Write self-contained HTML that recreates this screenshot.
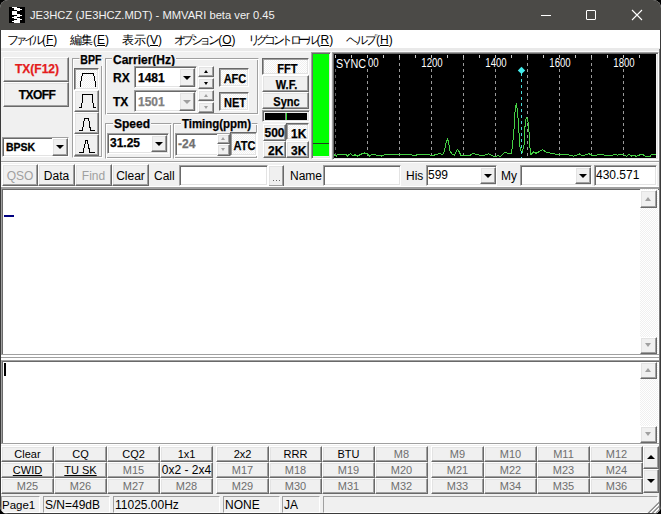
<!DOCTYPE html><html><head><meta charset="utf-8"><style>*{box-sizing:border-box;margin:0;padding:0}
html,body{width:661px;height:514px;overflow:hidden;background:#000}
body{position:relative;font-family:"Liberation Sans",sans-serif;font-size:12px;color:#000}
.a{position:absolute}
#win{position:absolute;left:0;top:0;width:661px;height:514px;background:#f0f0f0;border-radius:8px;overflow:hidden}
#title{position:absolute;left:0;top:0;width:661px;height:30px;background:#4b4a47}
#menu{position:absolute;left:0;top:30px;width:661px;height:18px;background:#fff}
.btn{position:absolute;background:#f0f0f0;border:1px solid;border-color:#fff #696969 #696969 #fff;box-shadow:inset -1px -1px #a0a0a0,inset 1px 1px #e3e3e3;text-align:center;white-space:nowrap;overflow:hidden}
.prs{position:absolute;border:1px solid;border-color:#696969 #fff #fff #696969;box-shadow:inset 1px 1px #a0a0a0,inset -1px -1px #e3e3e3;text-align:center;white-space:nowrap;overflow:hidden;background-color:#f0f0f0;background-image:linear-gradient(45deg,#fff 25%,transparent 25%,transparent 75%,#fff 75%),linear-gradient(45deg,#fff 25%,transparent 25%,transparent 75%,#fff 75%);background-size:2px 2px;background-position:0 0,1px 1px}
.sunk{position:absolute;background:#fff;border:1px solid;border-color:#a0a0a0 #fff #fff #a0a0a0;box-shadow:inset 1px 1px #696969,inset -1px -1px #e3e3e3;white-space:nowrap;overflow:hidden}
.grp{position:absolute;border:1px solid;border-color:#a0a0a0 #fff #fff #a0a0a0;box-shadow:inset 1px 1px #fff,inset -1px -1px #a0a0a0}
.gl{position:absolute;background:#f0f0f0;font-weight:bold;font-size:12px;line-height:12px;padding:0 1px;white-space:nowrap}
.b{font-weight:bold}
.dd{position:absolute;background:#f0f0f0;border:1px solid;border-color:#fff #696969 #696969 #fff;box-shadow:inset -1px -1px #a0a0a0,inset 1px 1px #e3e3e3}
.dd:after{content:"";position:absolute;left:50%;top:50%;margin-left:-4px;margin-top:-2px;border-left:4px solid transparent;border-right:4px solid transparent;border-top:4px solid #000}
.dd.dis:after{border-top-color:#a0a0a0}
.lbl{position:absolute;white-space:nowrap}
.gr{color:#8d8d8d}
.sp{position:absolute;border:1px solid;border-color:#a0a0a0 #fff #fff #a0a0a0;box-shadow:inset 1px 1px #696969,inset -1px -1px #e3e3e3}

.lbl[style*="font-weight:bold"],.gl{-webkit-text-stroke:0.25px currentColor}
</style></head><body><div id="win"><div id="title"></div>
<svg class="a" style="left:9px;top:7px" width="16" height="16" viewBox="0 0 16 16" shape-rendering="crispEdges">
<rect width="16" height="16" fill="#000"/><g fill="#fff">
<rect x="3" y="0" width="3" height="1"/><rect x="5" y="0" width="3" height="3"/><rect x="8" y="1" width="3" height="3"/><rect x="11" y="2" width="2" height="1"/>
<rect x="3" y="4" width="5" height="4"/><rect x="8" y="7" width="3" height="3"/><rect x="11" y="8" width="2" height="1"/>
<rect x="3" y="10" width="2" height="1"/><rect x="5" y="9" width="3" height="3"/><rect x="8" y="11" width="3" height="2"/><rect x="11" y="12" width="2" height="1"/>
<rect x="3" y="14" width="2" height="1"/><rect x="5" y="13" width="6" height="3"/></g>
</svg>
<div class="lbl" style="left:30px;top:7px;color:#f2f2f2;font-size:11.2px;line-height:16px">JE3HCZ (JE3HCZ.MDT) - MMVARI beta ver 0.45</div>
<div class="a" style="left:541px;top:15px;width:10px;height:1px;background:#fff"></div>
<div class="a" style="left:586px;top:10px;width:10px;height:10px;border:1px solid #fff;border-radius:1px"></div>
<svg class="a" style="left:631px;top:9px" width="12" height="12" viewBox="0 0 12 12"><path d="M1 1L11 11M11 1L1 11" stroke="#fff" stroke-width="1.1"/></svg>
<div id="menu"></div>
<div class="lbl" style="left:9px;top:33px;font-size:12px;line-height:15px;height:15px"><span style="display:inline-block;width:33.0px;letter-spacing:-3.75px;vertical-align:top;height:15px;text-indent:-1.88px">ファイル</span><span style="display:inline-block;vertical-align:top;height:15px">(<u>F</u>)</span></div>
<div class="lbl" style="left:70.7px;top:33px;font-size:12px;line-height:15px;height:15px"><span style="display:inline-block;width:22.4px;letter-spacing:-0.80px;vertical-align:top;height:15px;text-indent:-0.40px">編集</span><span style="display:inline-block;vertical-align:top;height:15px">(<u>E</u>)</span></div>
<div class="lbl" style="left:122px;top:33px;font-size:12px;line-height:15px;height:15px"><span style="display:inline-block;width:24.0px;letter-spacing:0.00px;vertical-align:top;height:15px;text-indent:0.00px">表示</span><span style="display:inline-block;vertical-align:top;height:15px">(<u>V</u>)</span></div>
<div class="lbl" style="left:175.2px;top:33px;font-size:12px;line-height:15px;height:15px"><span style="display:inline-block;width:43.0px;letter-spacing:-3.40px;vertical-align:top;height:15px;text-indent:-1.70px">オプション</span><span style="display:inline-block;vertical-align:top;height:15px">(<u>O</u>)</span></div>
<div class="lbl" style="left:249.3px;top:33px;font-size:12px;line-height:15px;height:15px"><span style="display:inline-block;width:67.2px;letter-spacing:-3.60px;vertical-align:top;height:15px;text-indent:-1.80px">リグコントロール</span><span style="display:inline-block;vertical-align:top;height:15px">(<u>R</u>)</span></div>
<div class="lbl" style="left:347.5px;top:33px;font-size:12px;line-height:15px;height:15px"><span style="display:inline-block;width:28.5px;letter-spacing:-2.50px;vertical-align:top;height:15px;text-indent:-1.25px">ヘルプ</span><span style="display:inline-block;vertical-align:top;height:15px">(<u>H</u>)</span></div>
<div class="a" style="left:0;top:48px;width:661px;height:3px;background:#e9e9e9"></div>
<div class="a" style="left:0;top:51px;width:661px;height:1px;background:#fafafa"></div>
<div class="btn" style="left:3px;top:57px;width:66px;height:25px;"></div>
<div class="lbl" style="left:4px;top:62px;line-height:14px;width:66px;text-align:center;color:#e41c1c;font-weight:bold">TX(F12)</div>
<div class="btn" style="left:3px;top:82px;width:66px;height:25px;"></div>
<div class="lbl" style="left:4px;top:88px;line-height:14px;width:66px;text-align:center;font-weight:bold;letter-spacing:-0.6px">TXOFF</div>
<div class="sunk" style="left:2px;top:137px;width:67px;height:20px;"></div>
<div class="lbl" style="left:6px;top:140px;line-height:14px;font-weight:bold;font-size:10.5px;-webkit-text-stroke:0.3px #000">BPSK</div>
<div class="dd" style="left:52px;top:138px;width:16px;height:18px;"></div>
<div class="grp" style="left:72px;top:58px;width:31px;height:100px;"></div>
<div class="gl" style="left:78px;top:54px;font-size:12px;transform:scaleX(0.88);transform-origin:12px 0">BPF</div>
<div class="prs" style="left:74px;top:68px;width:25px;height:22px;"></div>
<div class="btn" style="left:74px;top:90px;width:25px;height:22px;"></div>
<div class="btn" style="left:74px;top:112px;width:25px;height:22px;"></div>
<div class="btn" style="left:74px;top:134px;width:25px;height:22px;"></div>
<svg class="a" style="left:0;top:0" width="661" height="514"><path d="M80.5 87V83L82.5 73.5H93.5L95.5 83V87 M79 107.5H81.5L83 94H92L93.5 107.5H96 M79 130.5H82.5L84.5 118H88.5L90.5 130.5H95 M79 152.5H83L86 140H87L90 152.5H95" stroke="#000" stroke-width="1" fill="none" shape-rendering="crispEdges"/></svg>
<div class="grp" style="left:105px;top:58px;width:154px;height:57px;"></div>
<div class="gl" style="left:112px;top:54px">Carrier(Hz)</div>
<div class="lbl" style="left:113px;top:71px;line-height:14px;font-weight:bold">RX</div>
<div class="lbl" style="left:113px;top:95px;line-height:14px;font-weight:bold">TX</div>
<div class="sunk" style="left:134px;top:66px;width:63px;height:22px;"></div>
<div class="lbl" style="left:138px;top:71px;line-height:14px;font-weight:bold">1481</div>
<div class="dd" style="left:179px;top:68px;width:16px;height:19px;"></div>
<div class="sunk" style="left:134px;top:90px;width:63px;height:22px;"></div>
<div class="lbl" style="left:138px;top:95px;line-height:14px;font-weight:bold;color:#808080">1501</div>
<div class="dd dis" style="left:179px;top:92px;width:16px;height:19px;"></div>
<div class="btn" style="left:198px;top:66px;width:16px;height:11px;"><div class="a" style="left:5px;top:3px;width:1px;height:0;border-left:2px solid transparent;border-right:2px solid transparent;border-bottom:3px solid #000"></div></div>
<div class="btn" style="left:198px;top:78px;width:16px;height:11px;"><div class="a" style="left:5px;top:3px;width:1px;height:0;border-left:2px solid transparent;border-right:2px solid transparent;border-top:3px solid #000"></div></div>
<div class="btn" style="left:198px;top:90px;width:16px;height:11px;"><div class="a" style="left:5px;top:3px;width:1px;height:0;border-left:2px solid transparent;border-right:2px solid transparent;border-bottom:3px solid #a0a0a0"></div></div>
<div class="btn" style="left:198px;top:102px;width:16px;height:11px;"><div class="a" style="left:5px;top:3px;width:1px;height:0;border-left:2px solid transparent;border-right:2px solid transparent;border-top:3px solid #a0a0a0"></div></div>
<div class="prs" style="left:219px;top:68px;width:30px;height:19px;"></div>
<div class="lbl" style="left:220px;top:72px;line-height:14px;width:30px;text-align:center;font-weight:bold;font-size:13px;transform:scaleX(0.85);">AFC</div>
<div class="prs" style="left:219px;top:92px;width:30px;height:19px;"></div>
<div class="lbl" style="left:220px;top:96px;line-height:14px;width:30px;text-align:center;font-weight:bold;font-size:13px;transform:scaleX(0.85);">NET</div>
<div class="grp" style="left:105px;top:123px;width:67px;height:36px;"></div>
<div class="gl" style="left:113px;top:118px">Speed</div>
<div class="sunk" style="left:107px;top:133px;width:62px;height:21px;"></div>
<div class="lbl" style="left:110px;top:136px;line-height:14px;font-weight:bold">31.25</div>
<div class="dd" style="left:151px;top:135px;width:16px;height:17px;"></div>
<div class="grp" style="left:173px;top:123px;width:85px;height:36px;"></div>
<div class="gl" style="left:181px;top:118px;font-size:12px;transform:scaleX(0.955);transform-origin:0 0">Timing(ppm)</div>
<div class="sunk" style="left:175px;top:133px;width:56px;height:23px;"></div>
<div class="lbl" style="left:178px;top:137px;line-height:14px;color:#707070;font-weight:bold">-24</div>
<div class="btn" style="left:217px;top:134px;width:13px;height:10px;"><div class="a" style="left:3px;top:2px;width:1px;height:0;border-left:2px solid transparent;border-right:2px solid transparent;border-bottom:3px solid #a0a0a0"></div></div>
<div class="btn" style="left:217px;top:144px;width:13px;height:12px;"><div class="a" style="left:3px;top:3px;width:1px;height:0;border-left:2px solid transparent;border-right:2px solid transparent;border-top:3px solid #a0a0a0"></div></div>
<div class="prs" style="left:230px;top:132px;width:27px;height:24px;"></div>
<div class="lbl" style="left:231px;top:139px;line-height:14px;width:27px;text-align:center;font-weight:bold;font-size:13px;transform:scaleX(0.85);">ATC</div>
<div class="prs" style="left:262px;top:58px;width:47px;height:17px;"></div>
<div class="lbl" style="left:264px;top:62px;line-height:14px;width:47px;text-align:center;font-weight:bold;font-size:13px;transform:scaleX(0.85);">FFT</div>
<div class="btn" style="left:262px;top:75px;width:47px;height:17px;"></div>
<div class="lbl" style="left:263px;top:78px;line-height:14px;width:47px;text-align:center;font-weight:bold;font-size:13px;transform:scaleX(0.85);">W.F.</div>
<div class="btn" style="left:262px;top:92px;width:47px;height:17px;"></div>
<div class="lbl" style="left:263px;top:95px;line-height:14px;width:47px;text-align:center;font-weight:bold;font-size:13px;transform:scaleX(0.85);">Sync</div>
<div class="sp" style="left:262px;top:110px;width:48px;height:12px;"><div class="a" style="left:2px;top:2px;width:42px;height:7px;background:#000"></div><div class="a" style="left:22px;top:2px;width:1px;height:7px;background:#808080"></div><div class="a" style="left:23px;top:2px;width:1px;height:7px;background:#30e030"></div></div>
<div class="btn" style="left:263px;top:124px;width:23px;height:17px;"></div>
<div class="lbl" style="left:263px;top:126px;line-height:14px;width:23px;text-align:center;font-weight:bold">500</div>
<div class="prs" style="left:286px;top:123px;width:23px;height:17px;"></div>
<div class="lbl" style="left:291px;top:127px;line-height:14px;font-weight:bold">1K</div>
<div class="btn" style="left:263px;top:141px;width:23px;height:17px;"></div>
<div class="lbl" style="left:268px;top:144px;line-height:14px;font-weight:bold">2K</div>
<div class="btn" style="left:286px;top:141px;width:23px;height:17px;"></div>
<div class="lbl" style="left:291px;top:144px;line-height:14px;font-weight:bold">3K</div>
<div class="sp" style="left:311px;top:52px;width:20px;height:107px;"><div class="a" style="left:1px;top:1px;width:16px;height:102px;background:#00ff00"></div><div class="a" style="left:1px;top:90px;width:16px;height:1px;background:#204020"></div></div>
<div class="sp" style="left:332px;top:52px;width:327px;height:108px;"></div>
<div class="a" style="left:334px;top:54px;width:322px;height:104px;background:#000"></div>
<svg class="a" style="left:0;top:0" width="661" height="514"><line x1="335.5" y1="57" x2="335.5" y2="158" stroke="#606060" stroke-dasharray="3 3"/><line x1="335.5" y1="55" x2="335.5" y2="58" stroke="#c8c8c8"/><line x1="367.5" y1="57" x2="367.5" y2="158" stroke="#9a9a9a" stroke-dasharray="3 3"/><line x1="367.5" y1="55" x2="367.5" y2="58" stroke="#c8c8c8"/><line x1="399.5" y1="57" x2="399.5" y2="158" stroke="#9a9a9a" stroke-dasharray="3 3"/><line x1="399.5" y1="55" x2="399.5" y2="58" stroke="#c8c8c8"/><line x1="431.5" y1="57" x2="431.5" y2="158" stroke="#9a9a9a" stroke-dasharray="3 3"/><line x1="431.5" y1="55" x2="431.5" y2="58" stroke="#c8c8c8"/><line x1="463.5" y1="57" x2="463.5" y2="158" stroke="#9a9a9a" stroke-dasharray="3 3"/><line x1="463.5" y1="55" x2="463.5" y2="58" stroke="#c8c8c8"/><line x1="495.5" y1="57" x2="495.5" y2="158" stroke="#9a9a9a" stroke-dasharray="3 3"/><line x1="495.5" y1="55" x2="495.5" y2="58" stroke="#c8c8c8"/><line x1="527.5" y1="57" x2="527.5" y2="158" stroke="#9a9a9a" stroke-dasharray="3 3"/><line x1="527.5" y1="55" x2="527.5" y2="58" stroke="#c8c8c8"/><line x1="559.5" y1="57" x2="559.5" y2="158" stroke="#9a9a9a" stroke-dasharray="3 3"/><line x1="559.5" y1="55" x2="559.5" y2="58" stroke="#c8c8c8"/><line x1="591.5" y1="57" x2="591.5" y2="158" stroke="#9a9a9a" stroke-dasharray="3 3"/><line x1="591.5" y1="55" x2="591.5" y2="58" stroke="#c8c8c8"/><line x1="623.5" y1="57" x2="623.5" y2="158" stroke="#9a9a9a" stroke-dasharray="3 3"/><line x1="623.5" y1="55" x2="623.5" y2="58" stroke="#c8c8c8"/><line x1="351.5" y1="55" x2="351.5" y2="58" stroke="#c8c8c8"/><line x1="383.5" y1="55" x2="383.5" y2="58" stroke="#c8c8c8"/><line x1="415.5" y1="55" x2="415.5" y2="58" stroke="#c8c8c8"/><line x1="447.5" y1="55" x2="447.5" y2="58" stroke="#c8c8c8"/><line x1="479.5" y1="55" x2="479.5" y2="58" stroke="#c8c8c8"/><line x1="511.5" y1="55" x2="511.5" y2="58" stroke="#c8c8c8"/><line x1="543.5" y1="55" x2="543.5" y2="58" stroke="#c8c8c8"/><line x1="575.5" y1="55" x2="575.5" y2="58" stroke="#c8c8c8"/><line x1="607.5" y1="55" x2="607.5" y2="58" stroke="#c8c8c8"/><line x1="639.5" y1="55" x2="639.5" y2="58" stroke="#c8c8c8"/></svg>
<div class="a" style="left:356.5px;top:58px;width:22px;height:10px;background:#000"></div>
<div class="lbl" style="left:353.5px;top:57px;width:28px;text-align:center;color:#fff;font-size:12px;line-height:13px;transform:scaleX(0.8)">1000</div>
<div class="a" style="left:420.5px;top:58px;width:22px;height:10px;background:#000"></div>
<div class="lbl" style="left:417.5px;top:57px;width:28px;text-align:center;color:#fff;font-size:12px;line-height:13px;transform:scaleX(0.8)">1200</div>
<div class="a" style="left:484.5px;top:58px;width:22px;height:10px;background:#000"></div>
<div class="lbl" style="left:481.5px;top:57px;width:28px;text-align:center;color:#fff;font-size:12px;line-height:13px;transform:scaleX(0.8)">1400</div>
<div class="a" style="left:548.5px;top:58px;width:22px;height:10px;background:#000"></div>
<div class="lbl" style="left:545.5px;top:57px;width:28px;text-align:center;color:#fff;font-size:12px;line-height:13px;transform:scaleX(0.8)">1600</div>
<div class="a" style="left:612.5px;top:58px;width:22px;height:10px;background:#000"></div>
<div class="lbl" style="left:609.5px;top:57px;width:28px;text-align:center;color:#fff;font-size:12px;line-height:13px;transform:scaleX(0.8)">1800</div>
<div class="lbl" style="left:335px;top:58px;width:33px;height:11px;background:#000"></div>
<div class="lbl" style="left:336px;top:58px;color:#fff;font-size:12px;line-height:13px;transform:scaleX(0.9);transform-origin:0 0">SYNC</div>
<svg class="a" style="left:0;top:0" width="661" height="514"><polyline points="334,154.7 336.4,156.0 337.5,154.7 346,154.7 347.5,156.0 350.5,153.5 353,156.0 355,154.7 357.5,156.0 360,154.7 362,153.7 364.5,153.0 367,153.5 369.5,156.0 372,154.3 381.5,156.0 386,154.3 391,155.0 394,154.3 398.5,155.0 402,154.2 410,154.2 414.4,156.0 418,154.3 424,155.0 428,154.3 432.4,156.0 436,154.3 440,153.8 442.9,154.4 444.6,150.4 446.3,141.2 447.5,138.9 448.6,142.3 449.8,150.4 452.1,154.4 454.4,155.0 457.3,149.2 459,151.5 460.7,155.0 470.5,155.0 473.4,153.3 475.7,154.4 483.1,155.6 488.3,153.8 492.3,155.6 495.2,156.7 498.1,155.6 500.4,156.4 505,152.1 509,153.8 511.4,153.5 512.6,144.0 513.9,131.4 515.2,108.6 516.4,102.9 517.7,113.7 519,132.7 520.2,149.1 522.1,152.9 524,145.3 525.3,121.2 526.8,117.5 527.8,120.0 529.1,132.7 530.1,149.2 530.6,154.0 531.7,154.0 533.3,151.9 536,153.3 538.6,151.9 542.3,149.7 545,151.4 546.5,152.2 549.2,152.9 555,154.0 565.6,154.0 567.7,154.5 569.3,155.1 573.6,156.1 576.2,155.6 579.4,154.0 583,156.1 585.7,154.5 588.9,153.7 591.6,155.1 596,155.2 599.8,154.7 601.6,154.0 604,155.2 612.9,155.2 614.8,154.0 617.1,155.2 620.9,154.0 623.2,154.7 626.5,156.4 628.8,154.0 631.2,156.4 633,154.9 636.3,156.4 642,154.0 645.7,156.4 650,156.4 651.3,154.9 656,154.9" stroke="#44d044" stroke-width="1" fill="none" shape-rendering="crispEdges"/><line x1="521.5" y1="73" x2="521.5" y2="76" stroke="#48e0e0"/><line x1="521.5" y1="79" x2="521.5" y2="158" stroke="#48d8d8" stroke-dasharray="3 3"/><path d="M521.5 66.7L525.2 70.4L521.5 74.1L517.8 70.4Z" fill="#44ecec"/></svg>
<div class="a" style="left:0;top:161px;width:661px;height:1px;background:#a0a0a0"></div>
<div class="a" style="left:0;top:162px;width:661px;height:1px;background:#fff"></div>
<div class="btn" style="left:2px;top:164px;width:36px;height:22px;"></div>
<div class="lbl" style="left:2px;top:169px;line-height:14px;width:36px;text-align:center;color:#a0a0a0">QSO</div>
<div class="btn" style="left:38px;top:164px;width:37px;height:22px;"></div>
<div class="lbl" style="left:38px;top:169px;line-height:14px;width:37px;text-align:center;">Data</div>
<div class="btn" style="left:75px;top:164px;width:37px;height:22px;"></div>
<div class="lbl" style="left:75px;top:169px;line-height:14px;width:37px;text-align:center;color:#a0a0a0">Find</div>
<div class="btn" style="left:112px;top:164px;width:37px;height:22px;"></div>
<div class="lbl" style="left:112px;top:169px;line-height:14px;width:37px;text-align:center;">Clear</div>
<div class="lbl" style="left:154px;top:169px;line-height:14px;">Call</div>
<div class="sunk" style="left:179px;top:165px;width:89px;height:21px;"></div>
<div class="btn" style="left:268px;top:165px;width:16px;height:22px;"></div>
<div class="a" style="left:273px;top:180px;width:1px;height:1px;background:#6a6a6a"></div>
<div class="a" style="left:276px;top:180px;width:1px;height:1px;background:#6a6a6a"></div>
<div class="a" style="left:279px;top:180px;width:1px;height:1px;background:#6a6a6a"></div>
<div class="lbl" style="left:290px;top:169px;line-height:14px;">Name</div>
<div class="sunk" style="left:323px;top:165px;width:78px;height:21px;"></div>
<div class="lbl" style="left:406px;top:169px;line-height:14px;">His</div>
<div class="sunk" style="left:426px;top:165px;width:71px;height:21px;"></div>
<div class="lbl" style="left:428px;top:168px;line-height:14px;">599</div>
<div class="dd" style="left:480px;top:167px;width:16px;height:17px;"></div>
<div class="lbl" style="left:501px;top:169px;line-height:14px;">My</div>
<div class="sunk" style="left:520px;top:165px;width:72px;height:21px;"></div>
<div class="dd" style="left:575px;top:167px;width:16px;height:17px;"></div>
<div class="sunk" style="left:594px;top:165px;width:63px;height:21px;"></div>
<div class="lbl" style="left:596px;top:168px;line-height:14px;">430.571</div>
<div class="a" style="left:0;top:186px;width:661px;height:1px;background:#fff"></div>
<div class="a" style="left:0;top:187px;width:661px;height:1px;background:#a0a0a0"></div>
<div class="a" style="left:1px;top:188px;width:658px;height:167px;background:#fff;border-top:1px solid #a0a0a0;border-left:1px solid #a0a0a0;border-bottom:1px solid #a0a0a0;box-shadow:inset 1px 1px #696969"></div>
<div class="a" style="left:4px;top:215px;width:10px;height:2px;background:#000080"></div>
<div class="prs" style="left:640px;top:189px;width:18px;height:165px;border:none;box-shadow:none"></div>
<div class="btn" style="left:640px;top:190px;width:17px;height:18px;"><div class="a" style="left:4px;top:6px;width:1px;height:0;border-left:3px solid transparent;border-right:3px solid transparent;border-bottom:4px solid #a0a0a0"></div></div>
<div class="btn" style="left:640px;top:337px;width:17px;height:17px;"><div class="a" style="left:4px;top:5px;width:1px;height:0;border-left:3px solid transparent;border-right:3px solid transparent;border-top:4px solid #a0a0a0"></div></div>
<div class="a" style="left:1px;top:355px;width:658px;height:2px;background:#fff"></div>
<div class="a" style="left:1px;top:357px;width:658px;height:1px;background:#a0a0a0"></div>
<div class="a" style="left:1px;top:358px;width:658px;height:2px;background:#fff"></div>
<div class="a" style="left:1px;top:360px;width:658px;height:84px;background:#fff;border-top:1px solid #a0a0a0;border-left:1px solid #a0a0a0;border-bottom:1px solid #a0a0a0;box-shadow:inset 1px 1px #696969"></div>
<div class="a" style="left:4px;top:363px;width:2px;height:13px;background:#000"></div>
<div class="prs" style="left:640px;top:362px;width:18px;height:81px;border:none;box-shadow:none"></div>
<div class="btn" style="left:640px;top:362px;width:17px;height:17px;"><div class="a" style="left:4px;top:5px;width:1px;height:0;border-left:3px solid transparent;border-right:3px solid transparent;border-bottom:4px solid #a0a0a0"></div></div>
<div class="btn" style="left:640px;top:426px;width:17px;height:17px;"><div class="a" style="left:4px;top:5px;width:1px;height:0;border-left:3px solid transparent;border-right:3px solid transparent;border-top:4px solid #a0a0a0"></div></div>
<div class="a" style="left:1px;top:444px;width:658px;height:1px;background:#fff"></div>
<div class="btn" style="left:1px;top:446px;width:53px;height:16px;"></div>
<div class="lbl" style="left:1px;top:448px;width:53px;text-align:center;line-height:13px;font-size:11px;color:#000">Clear</div>
<div class="btn" style="left:54px;top:446px;width:53px;height:16px;"></div>
<div class="lbl" style="left:54px;top:448px;width:53px;text-align:center;line-height:13px;font-size:11px;color:#000">CQ</div>
<div class="btn" style="left:107px;top:446px;width:53px;height:16px;"></div>
<div class="lbl" style="left:107px;top:448px;width:53px;text-align:center;line-height:13px;font-size:11px;color:#000">CQ2</div>
<div class="btn" style="left:160px;top:446px;width:53px;height:16px;"></div>
<div class="lbl" style="left:160px;top:448px;width:53px;text-align:center;line-height:13px;font-size:11px;color:#000">1x1</div>
<div class="btn" style="left:216px;top:446px;width:53px;height:16px;"></div>
<div class="lbl" style="left:216px;top:448px;width:53px;text-align:center;line-height:13px;font-size:11px;color:#000">2x2</div>
<div class="btn" style="left:269px;top:446px;width:53px;height:16px;"></div>
<div class="lbl" style="left:269px;top:448px;width:53px;text-align:center;line-height:13px;font-size:11px;color:#000">RRR</div>
<div class="btn" style="left:322px;top:446px;width:53px;height:16px;"></div>
<div class="lbl" style="left:322px;top:448px;width:53px;text-align:center;line-height:13px;font-size:11px;color:#000">BTU</div>
<div class="btn" style="left:375px;top:446px;width:53px;height:16px;"></div>
<div class="lbl" style="left:375px;top:448px;width:53px;text-align:center;line-height:13px;font-size:11px;color:#6e6e6e">M8</div>
<div class="btn" style="left:431px;top:446px;width:53px;height:16px;"></div>
<div class="lbl" style="left:431px;top:448px;width:53px;text-align:center;line-height:13px;font-size:11px;color:#6e6e6e">M9</div>
<div class="btn" style="left:484px;top:446px;width:53px;height:16px;"></div>
<div class="lbl" style="left:484px;top:448px;width:53px;text-align:center;line-height:13px;font-size:11px;color:#6e6e6e">M10</div>
<div class="btn" style="left:537px;top:446px;width:53px;height:16px;"></div>
<div class="lbl" style="left:537px;top:448px;width:53px;text-align:center;line-height:13px;font-size:11px;color:#6e6e6e">M11</div>
<div class="btn" style="left:590px;top:446px;width:53px;height:16px;"></div>
<div class="lbl" style="left:590px;top:448px;width:53px;text-align:center;line-height:13px;font-size:11px;color:#6e6e6e">M12</div>
<div class="btn" style="left:1px;top:462px;width:53px;height:16px;"></div>
<div class="lbl" style="left:1px;top:464px;width:53px;text-align:center;line-height:13px;font-size:11px;color:#000"><u>CWID</u></div>
<div class="btn" style="left:54px;top:462px;width:53px;height:16px;"></div>
<div class="lbl" style="left:54px;top:464px;width:53px;text-align:center;line-height:13px;font-size:11px;color:#000"><u>TU SK</u></div>
<div class="btn" style="left:107px;top:462px;width:53px;height:16px;"></div>
<div class="lbl" style="left:107px;top:464px;width:53px;text-align:center;line-height:13px;font-size:11px;color:#6e6e6e">M15</div>
<div class="btn" style="left:160px;top:462px;width:53px;height:16px;"></div>
<div class="lbl" style="left:160px;top:464px;width:53px;text-align:center;line-height:13px;font-size:12px;color:#000">0x2 - 2x4</div>
<div class="btn" style="left:216px;top:462px;width:53px;height:16px;"></div>
<div class="lbl" style="left:216px;top:464px;width:53px;text-align:center;line-height:13px;font-size:11px;color:#6e6e6e">M17</div>
<div class="btn" style="left:269px;top:462px;width:53px;height:16px;"></div>
<div class="lbl" style="left:269px;top:464px;width:53px;text-align:center;line-height:13px;font-size:11px;color:#6e6e6e">M18</div>
<div class="btn" style="left:322px;top:462px;width:53px;height:16px;"></div>
<div class="lbl" style="left:322px;top:464px;width:53px;text-align:center;line-height:13px;font-size:11px;color:#6e6e6e">M19</div>
<div class="btn" style="left:375px;top:462px;width:53px;height:16px;"></div>
<div class="lbl" style="left:375px;top:464px;width:53px;text-align:center;line-height:13px;font-size:11px;color:#6e6e6e">M20</div>
<div class="btn" style="left:431px;top:462px;width:53px;height:16px;"></div>
<div class="lbl" style="left:431px;top:464px;width:53px;text-align:center;line-height:13px;font-size:11px;color:#6e6e6e">M21</div>
<div class="btn" style="left:484px;top:462px;width:53px;height:16px;"></div>
<div class="lbl" style="left:484px;top:464px;width:53px;text-align:center;line-height:13px;font-size:11px;color:#6e6e6e">M22</div>
<div class="btn" style="left:537px;top:462px;width:53px;height:16px;"></div>
<div class="lbl" style="left:537px;top:464px;width:53px;text-align:center;line-height:13px;font-size:11px;color:#6e6e6e">M23</div>
<div class="btn" style="left:590px;top:462px;width:53px;height:16px;"></div>
<div class="lbl" style="left:590px;top:464px;width:53px;text-align:center;line-height:13px;font-size:11px;color:#6e6e6e">M24</div>
<div class="btn" style="left:1px;top:478px;width:53px;height:16px;"></div>
<div class="lbl" style="left:1px;top:480px;width:53px;text-align:center;line-height:13px;font-size:11px;color:#6e6e6e">M25</div>
<div class="btn" style="left:54px;top:478px;width:53px;height:16px;"></div>
<div class="lbl" style="left:54px;top:480px;width:53px;text-align:center;line-height:13px;font-size:11px;color:#6e6e6e">M26</div>
<div class="btn" style="left:107px;top:478px;width:53px;height:16px;"></div>
<div class="lbl" style="left:107px;top:480px;width:53px;text-align:center;line-height:13px;font-size:11px;color:#6e6e6e">M27</div>
<div class="btn" style="left:160px;top:478px;width:53px;height:16px;"></div>
<div class="lbl" style="left:160px;top:480px;width:53px;text-align:center;line-height:13px;font-size:11px;color:#6e6e6e">M28</div>
<div class="btn" style="left:216px;top:478px;width:53px;height:16px;"></div>
<div class="lbl" style="left:216px;top:480px;width:53px;text-align:center;line-height:13px;font-size:11px;color:#6e6e6e">M29</div>
<div class="btn" style="left:269px;top:478px;width:53px;height:16px;"></div>
<div class="lbl" style="left:269px;top:480px;width:53px;text-align:center;line-height:13px;font-size:11px;color:#6e6e6e">M30</div>
<div class="btn" style="left:322px;top:478px;width:53px;height:16px;"></div>
<div class="lbl" style="left:322px;top:480px;width:53px;text-align:center;line-height:13px;font-size:11px;color:#6e6e6e">M31</div>
<div class="btn" style="left:375px;top:478px;width:53px;height:16px;"></div>
<div class="lbl" style="left:375px;top:480px;width:53px;text-align:center;line-height:13px;font-size:11px;color:#6e6e6e">M32</div>
<div class="btn" style="left:431px;top:478px;width:53px;height:16px;"></div>
<div class="lbl" style="left:431px;top:480px;width:53px;text-align:center;line-height:13px;font-size:11px;color:#6e6e6e">M33</div>
<div class="btn" style="left:484px;top:478px;width:53px;height:16px;"></div>
<div class="lbl" style="left:484px;top:480px;width:53px;text-align:center;line-height:13px;font-size:11px;color:#6e6e6e">M34</div>
<div class="btn" style="left:537px;top:478px;width:53px;height:16px;"></div>
<div class="lbl" style="left:537px;top:480px;width:53px;text-align:center;line-height:13px;font-size:11px;color:#6e6e6e">M35</div>
<div class="btn" style="left:590px;top:478px;width:53px;height:16px;"></div>
<div class="lbl" style="left:590px;top:480px;width:53px;text-align:center;line-height:13px;font-size:11px;color:#6e6e6e">M36</div>
<div class="btn" style="left:643px;top:446px;width:16px;height:23px;"><div class="a" style="left:3px;top:8px;width:1px;height:0;border-left:4px solid transparent;border-right:4px solid transparent;border-bottom:4px solid #000"></div></div>
<div class="btn" style="left:643px;top:469px;width:16px;height:24px;"><div class="a" style="left:3px;top:9px;width:1px;height:0;border-left:4px solid transparent;border-right:4px solid transparent;border-top:4px solid #000"></div></div>
<div class="a" style="left:1px;top:496px;width:39px;height:17px;border:1px solid;border-color:#a0a0a0 #fff #fff #a0a0a0;font-size:12px;line-height:15px;padding-left:1px;padding-top:1px;white-space:nowrap;overflow:hidden"><span style="font-size:11.5px;margin-left:-1px">Page1</span></div>
<div class="a" style="left:43px;top:496px;width:67px;height:17px;border:1px solid;border-color:#a0a0a0 #fff #fff #a0a0a0;font-size:12px;line-height:15px;padding-left:1px;padding-top:1px;white-space:nowrap;overflow:hidden">S/N=49dB</div>
<div class="a" style="left:113px;top:496px;width:107px;height:17px;border:1px solid;border-color:#a0a0a0 #fff #fff #a0a0a0;font-size:12px;line-height:15px;padding-left:1px;padding-top:1px;white-space:nowrap;overflow:hidden">11025.00Hz</div>
<div class="a" style="left:223px;top:496px;width:57px;height:17px;border:1px solid;border-color:#a0a0a0 #fff #fff #a0a0a0;font-size:12px;line-height:15px;padding-left:1px;padding-top:1px;white-space:nowrap;overflow:hidden">NONE</div>
<div class="a" style="left:282px;top:496px;width:38px;height:17px;border:1px solid;border-color:#a0a0a0 #fff #fff #a0a0a0;font-size:12px;line-height:15px;padding-left:1px;padding-top:1px;white-space:nowrap;overflow:hidden">JA</div>
<div class="a" style="left:323px;top:496px;width:335px;height:17px;border:1px solid;border-color:#a0a0a0 #fff #fff #a0a0a0;font-size:12px;line-height:15px;padding-left:1px;padding-top:1px;white-space:nowrap;overflow:hidden"></div>
<svg class="a" style="left:646px;top:500px" width="14" height="14"><path d="M13.5 2L2 13.5M13.5 6L6 13.5M13.5 10L10 13.5" stroke="#8a8a8a" stroke-width="1.4"/><path d="M13.5 3.5L3.5 13.5M13.5 7.5L7.5 13.5" stroke="#fff" stroke-width="1"/></svg>
<div class="a" style="left:0;top:30px;width:1px;height:484px;background:#3a3a3a"></div>
<div class="a" style="left:660px;top:30px;width:1px;height:484px;background:#3a3a3a"></div>
<div class="a" style="left:659px;top:49px;width:1px;height:465px;background:#7a7a7a"></div>
<div class="a" style="left:0;top:513px;width:661px;height:1px;background:#3a3a3a"></div></div></body></html>
